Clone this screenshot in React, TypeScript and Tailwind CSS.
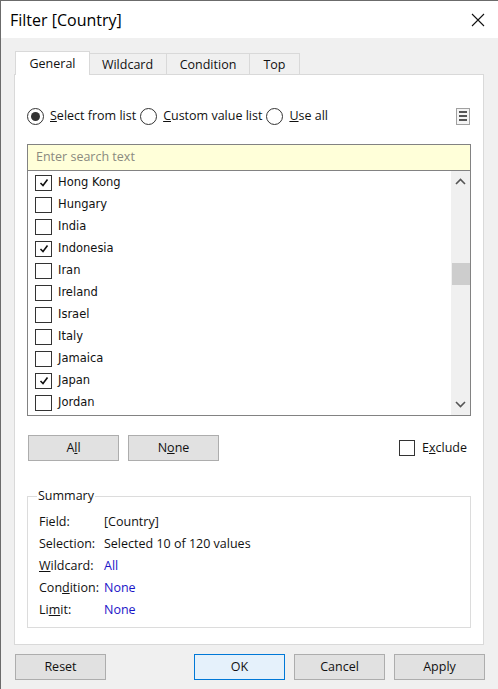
import React from "react";

const countries = [
  { name: "Hong Kong", checked: true },
  { name: "Hungary", checked: false },
  { name: "India", checked: false },
  { name: "Indonesia", checked: true },
  { name: "Iran", checked: false },
  { name: "Ireland", checked: false },
  { name: "Israel", checked: false },
  { name: "Italy", checked: false },
  { name: "Jamaica", checked: false },
  { name: "Japan", checked: true },
  { name: "Jordan", checked: false },
];

const ui = { fontFamily: '"Open Sans", "Noto Sans", sans-serif' };
const listFont = { fontFamily: '"DejaVu Sans", Verdana, sans-serif' };

const CheckBox = ({ checked }: { checked: boolean }) => (
  <span className="w-[17px] h-[16px] border border-[#333] bg-white flex items-center justify-center shrink-0">
    {checked && (
      <svg width="10" height="10" viewBox="0 0 10 10">
        <polyline points="1.5,5 4,7.5 8.5,1.5" fill="none" stroke="#111" strokeWidth="1.6" />
      </svg>
    )}
  </span>
);

const Radio = ({ on }: { on: boolean }) => (
  <span className="w-[17px] h-[17px] rounded-full border border-[#333] bg-white flex items-center justify-center shrink-0">
    {on && <span className="w-[9px] h-[9px] rounded-full bg-[#333]" />}
  </span>
);

const Btn = ({ children, primary }: { children: React.ReactNode; primary?: boolean }) => (
  <button
    className={`w-[91px] h-[26px] text-[12.5px] text-[#111] border ${
      primary ? "border-[#0078d7] bg-[#e5f1fb]" : "border-[#adadad] bg-[#e1e1e1]"
    }`}
    style={ui}
  >
    {children}
  </button>
);

const Tab = ({ label, active }: { label: string; active?: boolean }) => (
  <div
    className={`flex items-center justify-center pt-px text-[12.5px] text-[#111] border border-[#d9d9d9] border-b-0 ${
      active ? "w-[75px] h-[24px] bg-white -mr-px relative z-10" : "h-[22px] bg-[#f0f0f0] -ml-px"
    }`}
    style={ui}
  >
    {label}
  </div>
);

export default function App() {
  return (
    <div className="w-[498px] h-[689px] bg-[#f0f0f0] border-l border-t border-[#6b6b6b] flex flex-col overflow-hidden" style={ui}>
      {/* title bar */}
      <div className="h-[37px] bg-white flex items-center justify-between pl-[9px] pr-[12px] shrink-0">
        <span className="text-[16px] text-black">Filter [Country]</span>
        <svg width="16" height="16" viewBox="0 0 16 16">
          <path d="M2 2 L14 14 M14 2 L2 14" stroke="#111" strokeWidth="1.1" />
        </svg>
      </div>

      <div className="pl-[13px] pt-[14px] flex flex-col">
        {/* tabs */}
        <div className="flex items-end h-[23px] pl-px">
          <Tab label="General" active />
          <div className="w-[78px]"><Tab label="Wildcard" /></div>
          <div className="w-[83px]"><Tab label="Condition" /></div>
          <div className="w-[50px]"><Tab label="Top" /></div>
        </div>

        {/* panel */}
        <div className="w-[470px] h-[571px] bg-white border border-[#d9d9d9] -mt-px flex flex-col px-[12px]">
          <div className="flex items-center h-[20px] mt-[31px] text-[12.5px] text-[#111]">
            <Radio on />
            <span className="ml-[6px]"><u>S</u>elect from list</span>
            <span className="ml-[4px]"><Radio on={false} /></span>
            <span className="ml-[6px]"><u>C</u>ustom value list</span>
            <span className="ml-[4px]"><Radio on={false} /></span>
            <span className="ml-[6px]"><u>U</u>se all</span>
            <span className="ml-auto mr-[1px] w-[14px] h-[17px] border border-[#a0a0a0] bg-[#f4f4f4] flex flex-col items-center justify-center gap-[2px]">
              <span className="w-[8px] h-[2px] bg-[#555]" />
              <span className="w-[8px] h-[2px] bg-[#555]" />
              <span className="w-[8px] h-[2px] bg-[#555]" />
            </span>
          </div>

          {/* list box */}
          <div className="mt-[18px] w-[444px] h-[272px] border border-[#828282] flex flex-col">
            <div className="h-[26px] bg-[#ffffd9] border-b border-[#828282] flex items-center px-[8px] text-[12.5px] text-[#8a8a80]">
              Enter search text
            </div>
            <div className="flex flex-1">
              <div className="flex-1 flex flex-col pl-[7px] pt-px">
                {countries.map((c) => (
                  <div key={c.name} className="h-[22px] flex items-center gap-[6px]">
                    <CheckBox checked={c.checked} />
                    <span className="text-[11.5px] text-[#111]" style={listFont}>{c.name}</span>
                  </div>
                ))}
              </div>
              <div className="w-[19px] bg-[#f0f0f0] flex flex-col items-center">
                <div className="h-[21px] flex items-center">
                  <svg width="11" height="7" viewBox="0 0 11 7">
                    <polyline points="1,6 5.5,1.5 10,6" fill="none" stroke="#555" strokeWidth="1.6" />
                  </svg>
                </div>
                <div className="mt-[71px] w-[18px] h-[22px] bg-[#cdcdcd]" />
                <div className="flex-1" />
                <div className="h-[21px] flex items-center">
                  <svg width="11" height="7" viewBox="0 0 11 7">
                    <polyline points="1,1 5.5,5.5 10,1" fill="none" stroke="#555" strokeWidth="1.6" />
                  </svg>
                </div>
              </div>
            </div>
          </div>

          {/* All / None / Exclude */}
          <div className="flex items-center mt-[19px] gap-[9px] pl-px">
            <Btn>A<u>l</u>l</Btn>
            <Btn>N<u>o</u>ne</Btn>
            <div className="ml-auto mr-[4px] flex items-center gap-[7px] text-[12.5px] text-[#111]">
              <span className="w-[16px] h-[16px] border border-[#333] bg-white" />
              <span>E<u>x</u>clude</span>
            </div>
          </div>

          {/* summary */}
          <fieldset className="mt-[26px] w-[444px] h-[141px] border border-[#dcdcdc] px-[11px] pt-[6px]">
            <legend className="px-[1px] ml-[-2px] text-[12.5px] text-[#111]">Summary</legend>
            <div className="flex flex-col text-[12.5px] text-[#111]">
              {[
                ["Field:", "[Country]", false],
                ["Selection:", "Selected 10 of 120 values", false],
                [<><u>W</u>ildcard:</>, "All", true],
                [<>Con<u>d</u>ition:</>, "None", true],
                [<>Li<u>m</u>it:</>, "None", true],
              ].map(([k, v, blue], i) => (
                <div key={i} className="h-[22px] flex items-center">
                  <span className="w-[65px]">{k}</span>
                  <span className={blue ? "text-[#1a14c8]" : ""}>{v}</span>
                </div>
              ))}
            </div>
          </fieldset>
        </div>

        {/* bottom buttons */}
        <div className="flex items-center mt-[9px] pl-px">
          <Btn>Reset</Btn>
          <div className="ml-[88px] flex gap-[9px]">
            <Btn primary>OK</Btn>
            <Btn>Cancel</Btn>
            <Btn>Apply</Btn>
          </div>
        </div>
      </div>
    </div>
  );
}
